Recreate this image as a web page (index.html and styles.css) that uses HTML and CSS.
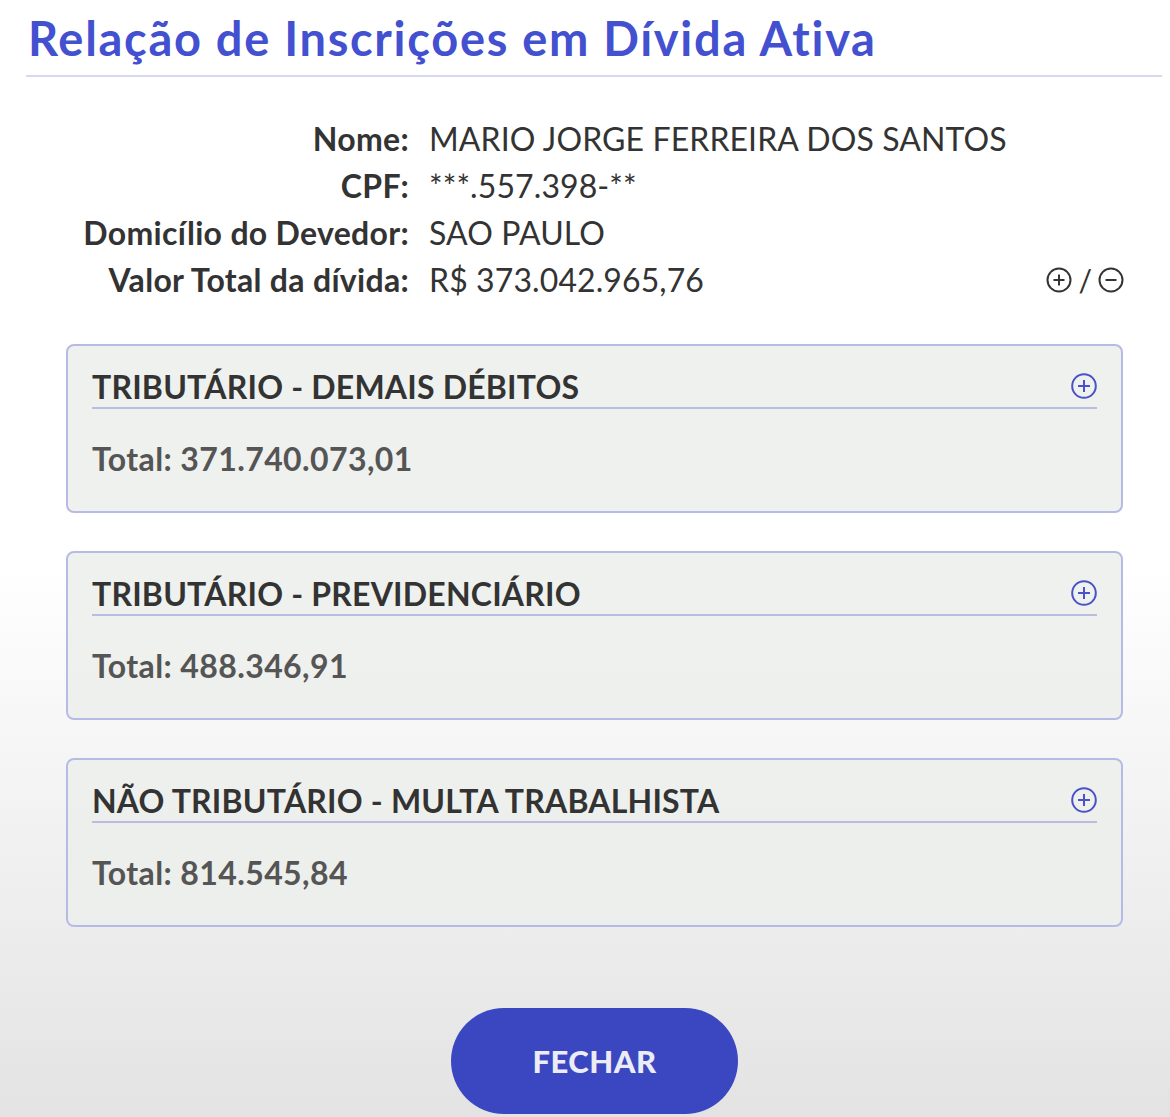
FILE: index.html
```html
<!DOCTYPE html>
<html lang="pt-BR">
<head>
<meta charset="utf-8">
<title>Relação de Inscrições em Dívida Ativa</title>
<link rel="stylesheet" href="styles.css">
</head>
<body>
<div class="page">
  <h1 class="title">Relação de Inscrições em Dívida Ativa</h1>
  <div class="rule"></div>

  <div class="info">
    <div class="label">Nome:</div><div class="value">MARIO JORGE FERREIRA DOS SANTOS</div><div></div>
    <div class="label">CPF:</div><div class="value">***.557.398-**</div><div></div>
    <div class="label">Domicílio do Devedor:</div><div class="value">SAO PAULO</div><div></div>
    <div class="label">Valor Total da dívida:</div><div class="value">R$ 373.042.965,76</div>
    <div class="toggles">
      <svg class="ico" viewBox="0 0 26 26"><circle cx="13" cy="13" r="11.5" fill="none" stroke="#333" stroke-width="2"/><path d="M13 7.5v11M7.5 13h11" stroke="#333" stroke-width="2"/></svg>
      <span class="slash">/</span>
      <svg class="ico" viewBox="0 0 26 26"><circle cx="13" cy="13" r="11.5" fill="none" stroke="#333" stroke-width="2"/><path d="M7.5 13h11" stroke="#333" stroke-width="2"/></svg>
    </div>
  </div>

  <div class="cards">
    <div class="card">
      <div class="card-head">
        <span class="card-title">TRIBUTÁRIO - DEMAIS DÉBITOS</span>
        <svg class="ico" viewBox="0 0 26 26"><circle cx="13" cy="13" r="11.8" fill="none" stroke="#4a52c8" stroke-width="2"/><path d="M13 7v12M7 13h12" stroke="#4a52c8" stroke-width="2"/></svg>
      </div>
      <div class="card-total">Total: 371.740.073,01</div>
    </div>
    <div class="card">
      <div class="card-head">
        <span class="card-title">TRIBUTÁRIO - PREVIDENCIÁRIO</span>
        <svg class="ico" viewBox="0 0 26 26"><circle cx="13" cy="13" r="11.8" fill="none" stroke="#4a52c8" stroke-width="2"/><path d="M13 7v12M7 13h12" stroke="#4a52c8" stroke-width="2"/></svg>
      </div>
      <div class="card-total">Total: 488.346,91</div>
    </div>
    <div class="card">
      <div class="card-head">
        <span class="card-title">NÃO TRIBUTÁRIO - MULTA TRABALHISTA</span>
        <svg class="ico" viewBox="0 0 26 26"><circle cx="13" cy="13" r="11.8" fill="none" stroke="#4a52c8" stroke-width="2"/><path d="M13 7v12M7 13h12" stroke="#4a52c8" stroke-width="2"/></svg>
      </div>
      <div class="card-total">Total: 814.545,84</div>
    </div>
    <div class="actions">
      <button class="btn">FECHAR</button>
    </div>
  </div>
</div>
</body>
</html>
```
FILE: styles.css
```css
html, body {
  margin: 0;
  padding: 0;
}
body {
  width: 1170px;
  height: 1117px;
  overflow: hidden;
  font-family: "Lato", "Noto Sans", sans-serif;
  background: linear-gradient(to bottom, #ffffff 0px, #ffffff 560px, #e3e3e3 1117px);
  color: #333;
}
.page {
  padding-top: 11px;
}
.title {
  margin: 0 0 0 28px;
  font-size: 47px;
  line-height: 54px;
  font-weight: 700;
  color: #4350cf;
  letter-spacing: 1.7px;
}
.rule {
  margin: 10px 8px 0 26px;
  height: 2px;
  background: #d8d9ee;
}
.info {
  display: grid;
  grid-template-columns: 409px 1fr auto;
  column-gap: 20px;
  margin: 38px 46px 0 0;
  font-size: 32px;
  line-height: 47px;
}
.label {
  text-align: right;
  font-weight: 700;
  color: #333;
  letter-spacing: 0.3px;
}
.value {
  color: #333;
  font-weight: 400;
  letter-spacing: 0.1px;
}
.toggles {
  display: flex;
  align-items: center;
  gap: 6px;
  color: #333;
}
.ico {
  width: 26px;
  height: 26px;
  display: block;
}
.slash {
  font-size: 30px;
  line-height: 30px;
}
.cards {
  margin: 41px 47px 0 66px;
  display: flex;
  flex-direction: column;
  gap: 38px;
}
.card {
  height: 169px;
  box-sizing: border-box;
  border: 2px solid #b6bbe6;
  border-radius: 8px;
  background: rgba(236, 239, 235, 0.85);
  padding: 19px 24px 0 24px;
}
.card-head {
  display: flex;
  justify-content: space-between;
  align-items: center;
  border-bottom: 2px solid #b9bde0;
  height: 42px;
}
.card-title {
  font-size: 32px;
  font-weight: 700;
  color: #333;
  letter-spacing: 0.2px;
}
.card-total {
  margin-top: 30px;
  font-size: 32px;
  font-weight: 700;
  color: #555;
  letter-spacing: 0.4px;
}
.actions {
  display: flex;
  justify-content: center;
  margin-top: 43px;
}
.btn {
  width: 287px;
  height: 106px;
  border: none;
  border-radius: 53px;
  background: #3a47c0;
  color: #ececf4;
  font-family: "Lato", "Noto Sans", sans-serif;
  font-size: 31px;
  font-weight: 900;
  letter-spacing: 0.5px;
  padding: 0;
}
```
